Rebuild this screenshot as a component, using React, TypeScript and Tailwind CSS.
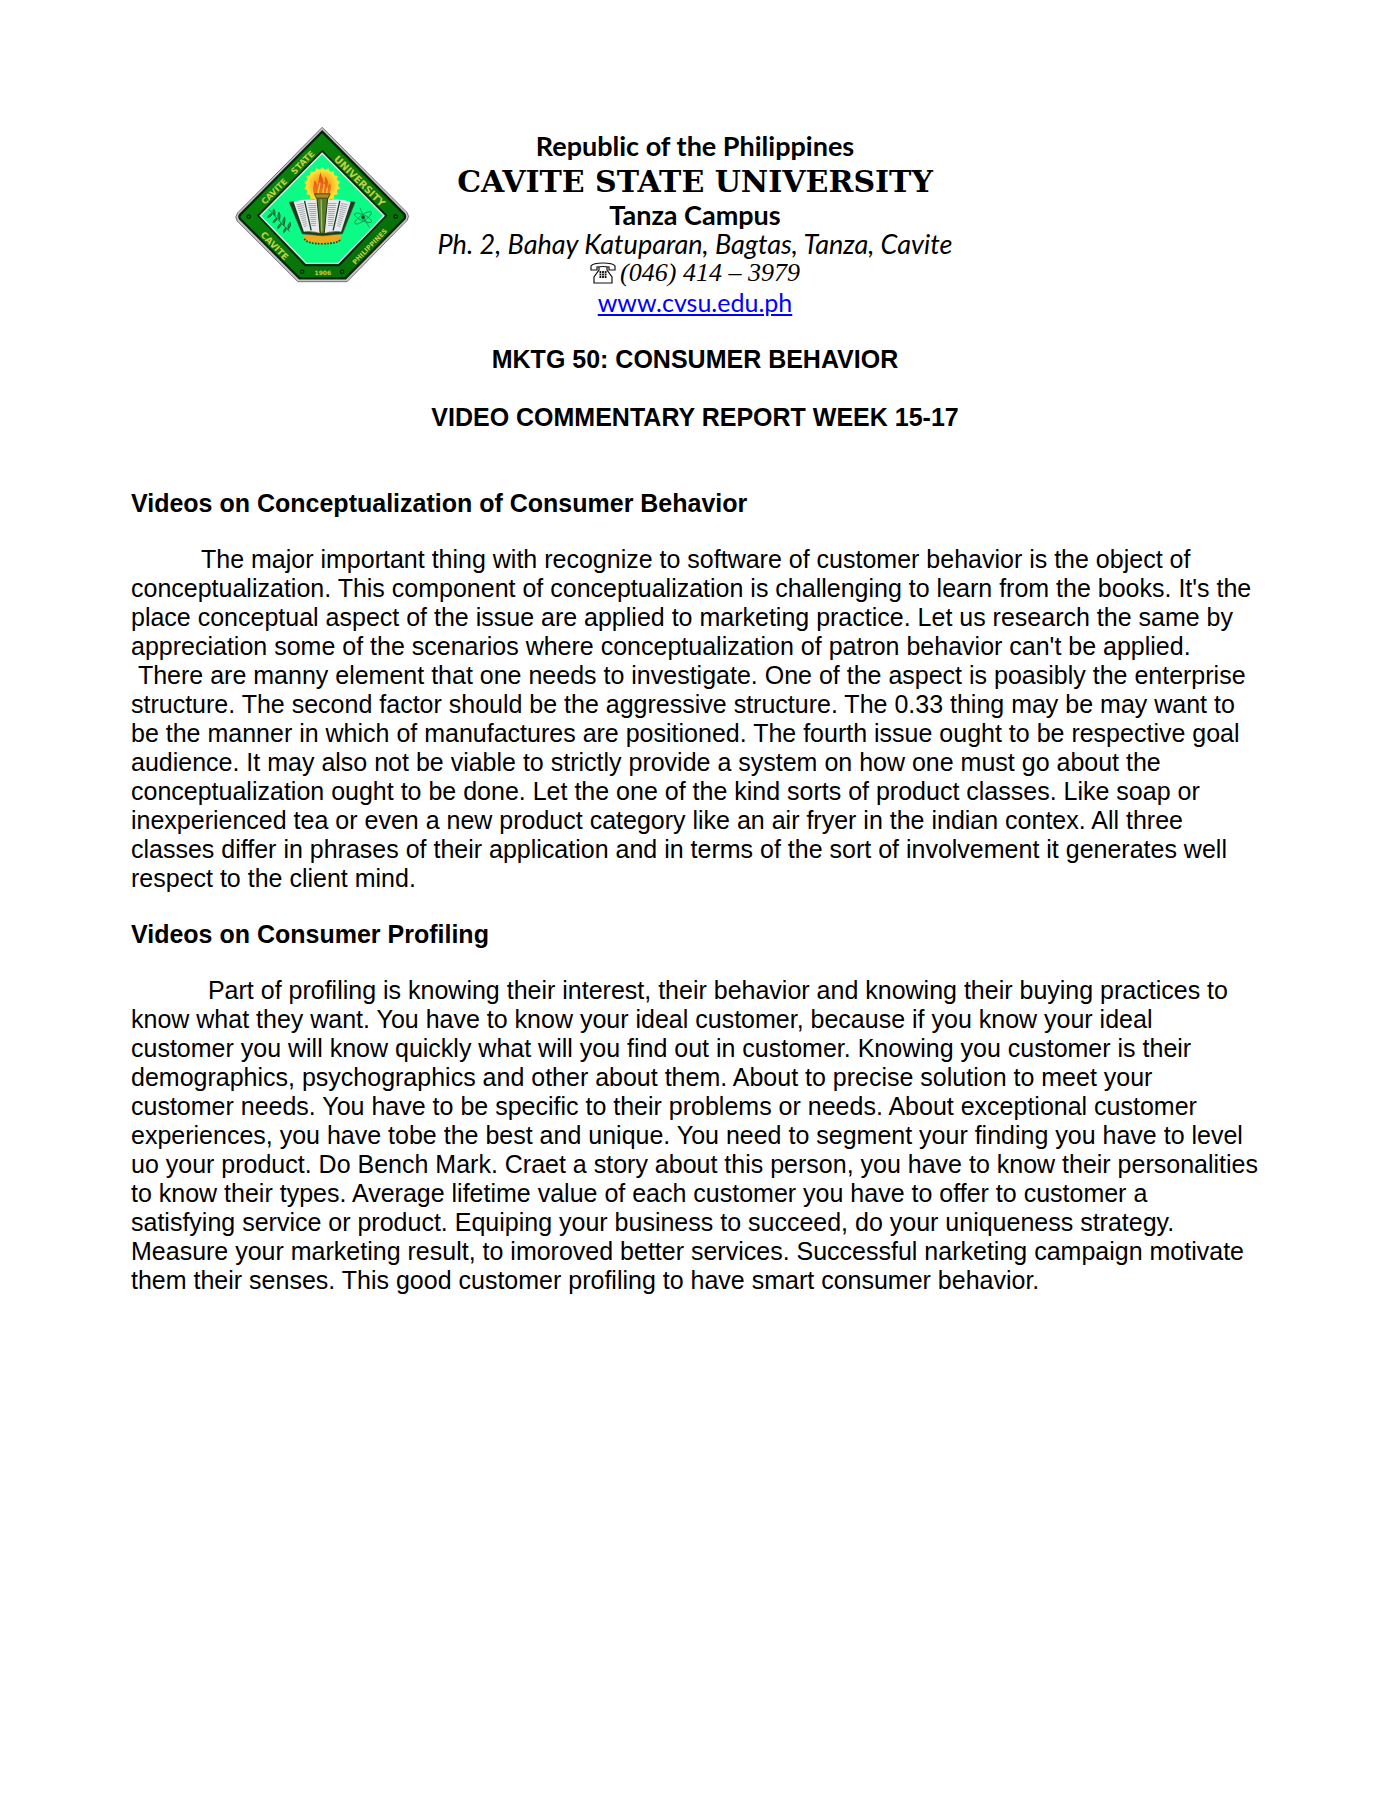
const rays = Array.from({ length: 18 }, (_, i) => i * 20);
const rows = [0, 1, 2, 3, 4, 5, 6, 7, 8, 9, 10, 11];

function Seal() {
  return (
    <svg viewBox="48 34 526 470" className="h-[157px] w-[175px]" role="img" aria-label="Cavite State University seal">
      <defs>
        <linearGradient id="band" x1="0" y1="0" x2="1" y2="1">
          <stop offset="0" stopColor="#0a8a0a" />
          <stop offset="1" stopColor="#056a08" />
        </linearGradient>
        <radialGradient id="sun">
          <stop offset="0.4" stopColor="#f9a11b" />
          <stop offset="1" stopColor="#fbe63a" />
        </radialGradient>
        <linearGradient id="flame" x1="0" y1="0" x2="0" y2="1">
          <stop offset="0" stopColor="#d8481a" />
          <stop offset="1" stopColor="#f0801c" />
        </linearGradient>
      </defs>
      <path d="M310 37 L564 292 Q574 304 566 316 L385 501 H237 L54 318 Q46 306 56 294 Z" fill="#c9c3c9" stroke="#77707a" strokeWidth="3" />
      <path d="M310 50 L557 298 Q561 306 557 312 L380 491 H242 L63 312 Q59 306 63 300 Z" fill="url(#band)" stroke="#04260a" strokeWidth="7" />
      <path d="M310 112 L499 302 L360 449 H260 L121 302 Z" fill="#0bfb86" stroke="#062b10" strokeWidth="11" />
      <path d="M310 115 L496 303 L358 446 H262 L124 303 Z" fill="#0bfb86" stroke="#d9efe0" strokeWidth="4" />

      <g fill="#c3cf48" fontFamily="DejaVu Sans, sans-serif" fontWeight="700" textAnchor="middle">
        <text transform="translate(172 236) rotate(-45)" fontSize="25">CAVITE</text>
        <text transform="translate(258 149) rotate(-45)" fontSize="26">STATE</text>
        <text transform="translate(415 206) rotate(45)" fontSize="30">UNIVERSITY</text>
        <text transform="translate(160 400) rotate(46)" fontSize="27">CAVITE</text>
        <text transform="translate(458 400) rotate(-46)" fontSize="20">PHILIPPINES</text>
        <text x="312" y="480" fontSize="18">1906</text>
      </g>
      <g fill="#2f7a1e" stroke="#03240a" strokeWidth="4">
        <circle cx="89" cy="305" r="5" />
        <circle cx="531" cy="305" r="5" />
        <circle cx="250" cy="471" r="5" />
        <circle cx="370" cy="471" r="5" />
      </g>

      <g fill="#fbdc2c">
        {rays.map((a) => (
          <path key={a} d="M299 168 L310 156 L321 168 Z" transform={`rotate(${a} 310 211)`} />
        ))}
      </g>
      <circle cx="310" cy="211" r="47" fill="url(#sun)" />
      <path d="M288 241 C276 222 288 212 286 196 C294 202 295 208 294 214 C303 200 297 188 306 173 C306 188 316 192 314 208 C320 200 320 192 318 184 C330 196 328 208 326 216 C330 212 332 206 332 202 C340 218 334 232 330 241 Z" fill="url(#flame)" />
      <path d="M300 240 C294 226 304 218 303 204 M314 240 C308 228 318 220 315 208 M325 238 C320 230 326 226 326 218" stroke="#fbd23a" strokeWidth="4" fill="none" />

      <ellipse cx="311" cy="368" rx="56" ry="17" fill="#eda81f" />
      <path d="M257 372 Q262 387 311 387 Q360 387 366 372" fill="none" stroke="#3c3a12" strokeWidth="5" strokeDasharray="5 4" />
      <path d="M211 262 L226 260 L262 350 L310 356 L358 350 L394 260 L409 262 L371 357 L310 363 L250 357 Z" fill="#14401c" stroke="#4d4a38" strokeWidth="2" />
      <path d="M224 261 Q262 250 296 257 L303 355 Q280 344 255 351 Z" fill="#e8e9ec" />
      <path d="M396 261 Q358 250 324 257 L317 355 Q340 344 367 351 Z" fill="#e8e9ec" />
      <path d="M257 258 L277 347 M363 258 L343 347" stroke="#14401c" strokeWidth="4" />
      <g stroke="#85888f" strokeWidth="2">
        {rows.map((i) => (
          <path key={i} d={`M${233 + i * 2} ${270 + i * 6} L${254 + i} ${266 + i * 6} M${267 + i} ${266 + i * 6} H292 M328 ${266 + i * 6} H${353 - i} M${366 - i} ${266 + i * 6} L${387 - i * 2} ${270 + i * 6}`} />
        ))}
      </g>
      <path d="M294 246 H327 L316 357 H304 Z" fill="#557d2d" stroke="#233d16" strokeWidth="3" />
      <path d="M307 254 L309 350" stroke="#b7ba3e" strokeWidth="4" />
      <path d="M287 237 H334 L328 250 H293 Z" fill="#a98d25" stroke="#48451a" strokeWidth="3" />

      <g stroke="#176b35" strokeWidth="3" fill="#2a9a4c">
        <path d="M150 284 Q178 316 212 350" fill="none" />
        <path d="M160 296 q-12 2 -14 12 q10 0 14 -12 M168 302 q2 -14 -4 -20 q-6 10 4 20 M174 310 q-12 4 -12 14 q10 -2 12 -14 M182 316 q4 -16 -2 -24 q-8 12 2 24 M188 325 q-12 4 -12 16 q10 -4 12 -16 M195 332 q6 -16 2 -26 q-10 12 -2 26 M202 339 q-10 4 -8 15 q8 -4 8 -15 M208 344 q10 -10 6 -22 q-10 8 -6 22" />
      </g>
      <g stroke="#147a3d" strokeWidth="2" fill="none">
        <ellipse cx="433" cy="309" rx="28" ry="9" transform="rotate(25 433 309)" />
        <ellipse cx="433" cy="309" rx="30" ry="9" transform="rotate(-35 433 309)" />
        <path d="M424 279 Q432 308 452 338" />
        <circle cx="433" cy="308" r="5" fill="#0c3f20" />
      </g>
    </svg>
  );
}

function Telephone() {
  return (
    <svg viewBox="0 0 26 22" className="h-[22px] w-[26px]" fill="none" stroke="#111" strokeWidth="1.2" aria-hidden="true">
      <path d="M1 8 V4 Q3 1 13 1 Q23 1 25 4 V8 H19 V5 Q13 4 7 5 V8 Z" />
      <path d="M9 5 V8 L4 15 V21 H22 V15 L17 8 V5" />
      <path d="M9.500 10 H16.500 M9.500 12.500 H16.500 M9.500 15 H16.500" strokeWidth="1.800" strokeDasharray="1.800 0.800" />
    </svg>
  );
}

export default function App() {
  return (
    <main className="min-h-screen bg-white px-[131px] pt-[126px] pb-24 font-['Liberation_Sans',Arial,sans-serif] text-[25px] leading-[29px] text-black">
      <header className="grid grid-cols-[1fr_auto_1fr] items-start">
        <div className="mr-7 justify-self-end">
          <Seal />
        </div>
        <div className="flex flex-col items-center pt-[2px] text-center font-['Lato',sans-serif] whitespace-nowrap">
          <p className="text-[27px] leading-[36px] font-bold">Republic of the Philippines</p>
          <p className="font-['DejaVu_Serif',serif] text-[30px] leading-[35px] font-bold">CAVITE STATE UNIVERSITY</p>
          <p className="text-[27px] leading-[31px] font-bold">Tanza Campus</p>
          <p className="text-[27px] leading-[28px] italic">Ph. 2, Bahay Katuparan, Bagtas, Tanza, Cavite</p>
          <p className="flex items-center gap-1 font-['Liberation_Serif',serif] text-[26px] leading-[29px] italic">
            <Telephone />
            <span>(046) 414 – 3979</span>
          </p>
          <a href="http://www.cvsu.edu.ph" className="text-[25px] leading-[30px] text-[#0000ff] underline">
            www.cvsu.edu.ph
          </a>
        </div>
      </header>

      <h1 className="mt-[28px] text-center font-bold">MKTG 50: CONSUMER BEHAVIOR</h1>
      <h2 className="mt-[29px] text-center font-bold">VIDEO COMMENTARY REPORT WEEK 15-17</h2>

      <section className="mt-[57px]">
        <h3 className="font-bold">Videos on Conceptualization of Consumer Behavior</h3>
        <p className="mt-[27px] indent-[70px]">
          The major important thing with recognize to software of customer behavior is the object of conceptualization. This component of conceptualization is challenging to learn from the books. It's the place conceptual aspect of the issue are applied to marketing practice. Let us research the same by appreciation some of the scenarios where conceptualization of patron behavior can't be applied.
        </p>
        <p>
          &nbsp;There are manny element that one needs to investigate. One of the aspect is poasibly the enterprise structure. The second factor should be the aggressive structure. The 0.33 thing may be may want to be the manner in which of manufactures are positioned. The fourth issue ought to be respective goal audience. It may also not be viable to strictly provide a system on how one must go about the conceptualization ought to be done. Let the one of the kind sorts of product classes. Like soap or inexperienced tea or even a new product category like an air fryer in the indian contex. All three classes differ in phrases of their application and in terms of the sort of involvement it generates well respect to the client mind.
        </p>
      </section>

      <section className="mt-[27px]">
        <h3 className="font-bold">Videos on Consumer Profiling</h3>
        <p className="mt-[27px] indent-[70px]">
          &nbsp;Part of profiling is knowing their interest, their behavior and knowing their buying practices to know what they want. You have to know your ideal customer, because if you know your ideal customer you will know quickly what will you find out in customer. Knowing you customer is their demographics, psychographics and other about them. About to precise solution to meet your customer needs. You have to be specific to their problems or needs. About exceptional customer experiences, you have tobe the best and unique. You need to segment your finding you have to level uo your product. Do Bench Mark. Craet a story about this person, you have to know their personalities to know their types. Average lifetime value of each customer you have to offer to customer a
          <br />
          satisfying service or product. Equiping your business to succeed, do your uniqueness strategy. Measure your marketing result, to imoroved better services. Successful narketing campaign motivate them their senses. This good customer profiling to have smart consumer behavior.
        </p>
      </section>
    </main>
  );
}
